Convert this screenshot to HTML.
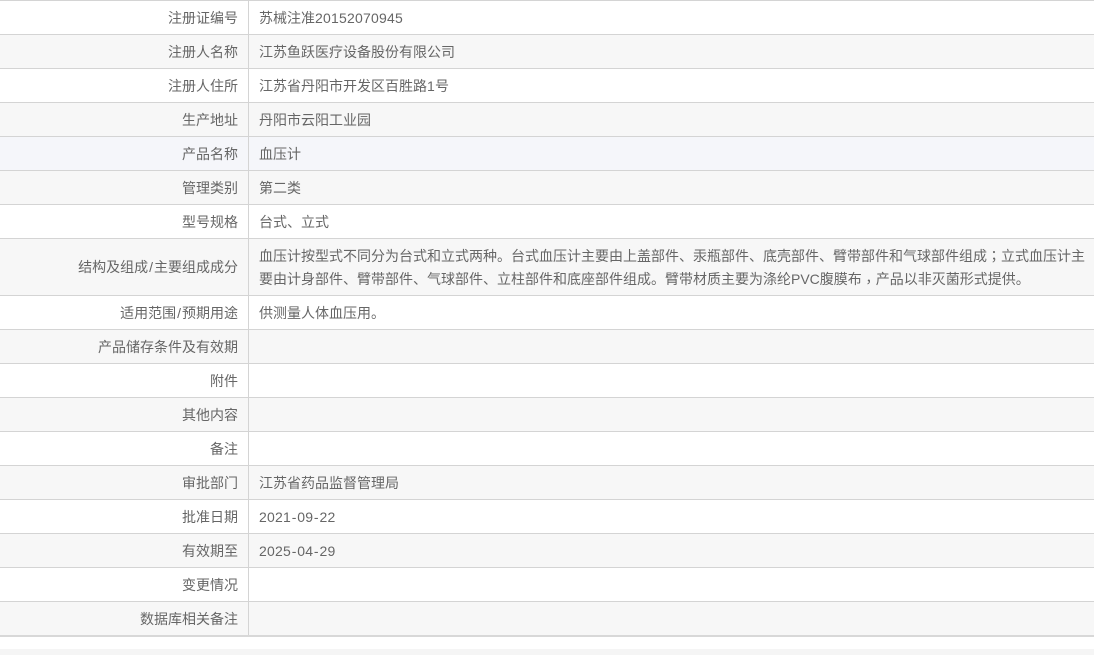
<!DOCTYPE html>
<html lang="zh">
<head>
<meta charset="utf-8">
<title>注册信息</title>
<style>
html,body{margin:0;padding:0;background:#fff;}
body{width:1094px;height:655px;overflow:hidden;position:relative;font-family:"Liberation Sans","Noto Sans CJK SC",sans-serif;font-size:14px;color:#666;}
.r{position:absolute;left:0;width:1094px;box-sizing:border-box;border-top:1px solid #d4d4d4;}
.g{background:#f7f7f7;}
.h{background:#f5f6fa;}
.l{position:absolute;left:0;top:0;bottom:0;width:238px;text-align:right;display:flex;align-items:center;justify-content:flex-end;white-space:nowrap;}
.d{position:absolute;left:248px;top:0;bottom:0;border-left:1px solid #d4d4d4;padding-left:10px;width:836px;display:flex;align-items:center;line-height:22px;}
.d>span{display:block;}
.n{letter-spacing:.22px;}
.m{padding:0 .67px;}
.s{padding:0 1px;}
.c{font-family:"Noto Sans CJK TC",sans-serif;}
.k{position:relative;top:3px;}
.e{position:absolute;left:0;top:649px;width:1094px;height:6px;background:#f5f5f5;}
</style>
</head>
<body>
<div class="r" style="top:0;height:34px"><div class="l">注册证编号</div><div class="d"><span>苏械注准<span class="n">20152070945</span></span></div></div>
<div class="r g" style="top:34px;height:34px"><div class="l">注册人名称</div><div class="d"><span>江苏鱼跃医疗设备股份有限公司</span></div></div>
<div class="r" style="top:68px;height:34px"><div class="l">注册人住所</div><div class="d"><span>江苏省丹阳市开发区百胜路<span class="n">1</span>号</span></div></div>
<div class="r g" style="top:102px;height:34px"><div class="l">生产地址</div><div class="d"><span>丹阳市云阳工业园</span></div></div>
<div class="r h" style="top:136px;height:34px"><div class="l">产品名称</div><div class="d"><span>血压计</span></div></div>
<div class="r g" style="top:170px;height:34px"><div class="l">管理类别</div><div class="d"><span>第二类</span></div></div>
<div class="r" style="top:204px;height:34px"><div class="l">型号规格</div><div class="d"><span>台式、立式</span></div></div>
<div class="r g" style="top:238px;height:57px"><div class="l">结构及组成<span class="s">/</span>主要组成成分</div><div class="d" style="padding-top:2px;line-height:23px;box-sizing:content-box"><span>血压计按型式不同分为台式和立式两种。台式血压计主要由上盖部件、汞瓶部件、底壳部件、臂带部件和气球部件组成<span class="c" lang="zh-TW">；</span>立式血压计主要由计身部件、臂带部件、气球部件、立柱部件和底座部件组成。臂带材质主要为涤纶PVC腹膜布<span class="c k" lang="zh-TW">，</span>产品以非灭菌形式提供。</span></div></div>
<div class="r" style="top:295px;height:34px"><div class="l">适用范围<span class="s">/</span>预期用途</div><div class="d"><span>供测量人体血压用。</span></div></div>
<div class="r g" style="top:329px;height:34px"><div class="l">产品储存条件及有效期</div><div class="d"></div></div>
<div class="r" style="top:363px;height:34px"><div class="l">附件</div><div class="d"></div></div>
<div class="r g" style="top:397px;height:34px"><div class="l">其他内容</div><div class="d"></div></div>
<div class="r" style="top:431px;height:34px"><div class="l">备注</div><div class="d"></div></div>
<div class="r g" style="top:465px;height:34px"><div class="l">审批部门</div><div class="d"><span>江苏省药品监督管理局</span></div></div>
<div class="r" style="top:499px;height:34px"><div class="l">批准日期</div><div class="d"><span class="n">2021<span class="m">-</span>09<span class="m">-</span>22</span></div></div>
<div class="r g" style="top:533px;height:34px"><div class="l">有效期至</div><div class="d"><span class="n">2025<span class="m">-</span>04<span class="m">-</span>29</span></div></div>
<div class="r" style="top:567px;height:34px"><div class="l">变更情况</div><div class="d"></div></div>
<div class="r g" style="top:601px;height:36px;border-bottom:2px solid #d8d8d8"><div class="l">数据库相关备注</div><div class="d"></div></div>
<div class="e"></div>
</body>
</html>
